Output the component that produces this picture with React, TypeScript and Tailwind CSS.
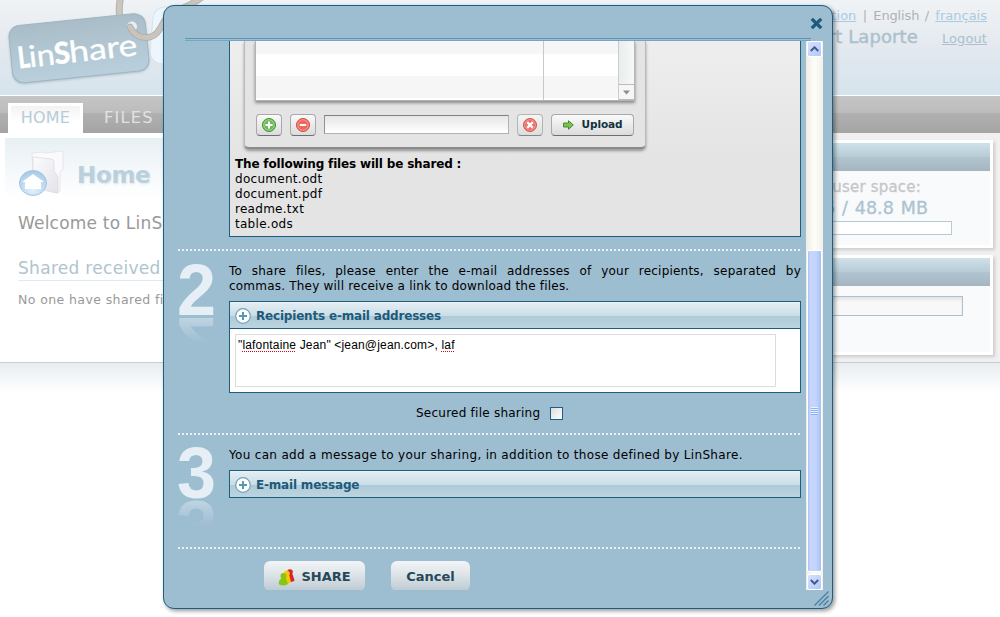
import type { ReactNode } from 'react';

function Logo() {
  return (
    <svg width="220" height="95" viewBox="0 0 220 95" className="block shrink-0">
      <defs>
        <linearGradient id="tag" x1="0" y1="0" x2="0" y2="1">
          <stop offset="0" stopColor="#a9bdc8" />
          <stop offset="1" stopColor="#b9d0dc" />
        </linearGradient>
        <filter id="soft" x="-10%" y="-10%" width="120%" height="130%">
          <feDropShadow dx="0" dy="1" stdDeviation="1.2" floodColor="#8a9aa5" floodOpacity="0.5" />
        </filter>
      </defs>
      <rect x="154" y="6" width="60" height="57" rx="12" fill="#edf6fc" stroke="#d5e3ec" transform="rotate(5 154 6)" />
      <path d="M120.500 -2 C119 5 119 10 119.500 15" fill="none" stroke="#b5b0aa" strokeWidth="7" />
      <path d="M120.500 -2 C119 5 119 10 119.500 15" fill="none" stroke="#cbc6c0" strokeWidth="5" />
      <g filter="url(#soft)">
        <rect x="10.500" y="19.500" width="137" height="57.500" rx="11" fill="url(#tag)" stroke="#9fb6c3" transform="rotate(-5.800 79 48)" />
      </g>
      <circle cx="132" cy="26.500" r="5" fill="#e9eef2" />
      <path d="M130 27 C134 35 141 39 150 37 C158 35 160 28 165 20 C172 10 188 8 201 -2" fill="none" stroke="#b0aba4" strokeWidth="6.500" strokeLinecap="round" />
      <path d="M130 27 C134 35 141 39 150 37 C158 35 160 28 165 20 C172 10 188 8 201 -2" fill="none" stroke="#c9c4be" strokeWidth="5" strokeLinecap="round" />
      <g transform="rotate(-6.500 20 68.500)" fill="#ffffff" stroke="#ffffff" strokeWidth="0.300" fontFamily="Lato, sans-serif" fontSize="30">
        <text x="19" y="68.500" fontWeight="900" textLength="12" lengthAdjust="spacingAndGlyphs">L</text>
        <text x="30" y="68.500" textLength="26" lengthAdjust="spacingAndGlyphs">in</text>
        <text x="55.500" y="68.500" fontWeight="900" textLength="16" lengthAdjust="spacingAndGlyphs">S</text>
        <text x="70.500" y="68.500" textLength="68.500" lengthAdjust="spacingAndGlyphs">hare</text>
      </g>
    </svg>
  );
}

function HomeIcon() {
  return (
    <svg width="48" height="50" viewBox="0 0 48 50" className="block">
      <defs>
        <linearGradient id="fold" x1="0" y1="0" x2="1" y2="1">
          <stop offset="0" stopColor="#fbfbfd" />
          <stop offset="1" stopColor="#e4e2ea" />
        </linearGradient>
        <radialGradient id="orb" cx="0.5" cy="0.75" r="0.7">
          <stop offset="0" stopColor="#e3f3fe" />
          <stop offset="1" stopColor="#a8cbea" />
        </radialGradient>
      </defs>
      <path d="M14 4 L25 3 L27 4 L45 2 V20 L42 24 V42 L39 44 L16 38 Z" fill="#fafafc" stroke="#e6e6ec" />
      <path d="M15 8 L33 10 Q36 10 36 14 V22 L40 28 V44 L34 43 L15 38 Z" fill="url(#fold)" stroke="#dddce3" strokeWidth="0.800" />
      <ellipse cx="15" cy="34" rx="13.500" ry="12.500" fill="url(#orb)" stroke="#a6c4df" />
      <path d="M15 25 L26 33 H23 V40 H7 V33 H4 Z" fill="#ffffff" />
    </svg>
  );
}

function SideCard({ height, children }: { height: string; children: ReactNode }) {
  return (
    <div className={`w-[193px] border-[3px] border-white bg-[#f8fafc] shadow-[2px_2px_3px_rgba(0,0,0,0.15)] ${height}`}>
      <div className="h-7 bg-[linear-gradient(#cfe1e9,#b7ccd7_50%,#b0c5d1_50%,#a5b5bf)]" />
      {children}
    </div>
  );
}

function Page() {
  return (
    <div className="flex h-[617px] w-[1000px] flex-col bg-white">
      <header className="flex h-[95px] justify-between bg-[linear-gradient(#f0f3f5,#e3e9ef_50%,#d6e4ed)]">
        <Logo />
        <div className="flex flex-col items-end pr-[13px] pt-[7px] text-[13px] whitespace-nowrap">
          <div className="flex h-[18px] leading-[18px] text-[#aeb2b5]">
            <span className="text-[#a9cbe2] underline">Administration</span>
            <span className="w-[17px] text-center">|</span>
            <span className="w-[45px] tracking-[-0.15px]">English</span>
            <span className="w-[17px] text-center">/</span>
            <span className="text-[#a9cbe2] underline">français</span>
          </div>
          <div className="flex h-6 items-center text-[#abc0cc]">
            <span className="pr-6 text-[18px] leading-6 tracking-[0.1px] [-webkit-text-stroke:0.4px_#abc0cc]">Robert Laporte</span>
            <span className="pt-[3px] text-[13px] tracking-[0.1px] underline">Logout</span>
          </div>
        </div>
      </header>
      <nav className="mt-px flex h-[37px] items-end bg-[linear-gradient(#c5c5c5,#bcbcbc_45%,#b1b1b1_46%,#a4a4a4)] pl-2 text-[16px]">
        <div className="flex h-[30px] w-[75px] items-center justify-center border-[3px] border-b-0 border-white bg-[linear-gradient(#f3f3f3,#ffffff_60%)] pb-[3px] tracking-[0.2px] text-[#b5ccd8]">HOME</div>
        <div className="flex h-[30px] items-center pl-[21px] tracking-[1.3px] text-[#e2e2e2]">FILES</div>
      </nav>
      <div className="flex h-[230px] border-b border-[#c9cdd0]">
        <main className="flex-1 pl-[5px] pt-[5px]">
          <div className="h-[223px] bg-[linear-gradient(#e8f0f4,#ffffff_60px)] pl-[13px] whitespace-nowrap">
            <div className="flex h-[70px] pt-[11px]">
              <HomeIcon />
              <h1 className="pt-[9px] pl-[11px] text-[23px] leading-[34px] font-bold tracking-[-0.3px] text-[#b9d1dd] [text-shadow:1px_1px_2px_#dfe6ea]">Home</h1>
            </div>
            <p className="h-[43px] pt-[5px] text-[17px] leading-[20px] tracking-[0.2px] text-[#999999]">Welcome to LinShare</p>
            <h2 className="h-[30px] border-b border-[#deebf3] pt-[6px] text-[17px] leading-[22px] tracking-[0.3px] text-[#afc4cf]">Shared received files</h2>
            <p className="pt-[10px] text-[12.500px] leading-[18px] tracking-[0.4px] text-[#999999]">No one have shared files</p>
          </div>
        </main>
        <aside className="flex w-[220px] flex-col gap-[7px] bg-[#f0f0f0] pt-[7px] pl-5">
          <SideCard height="h-[108px]">
            <div className="whitespace-nowrap">
              <div className="flex h-[27px] items-end justify-end pr-[69px] text-[15px] leading-[22px] tracking-[0.2px] text-[#c6c6c8] [-webkit-text-stroke:0.3px_#c6c6c8]">user space:</div>
              <div className="flex h-[23px] items-center justify-end pr-[62px] pb-[3px] text-[17.500px] leading-[20px] tracking-[0.1px] text-[#adc3d0] [-webkit-text-stroke:0.3px_#adc3d0] [word-spacing:1px]">21.6 / 48.8 MB</div>
              <div className="h-[14px] w-[149px] border border-[#b5ccd8] bg-white" />
            </div>
          </SideCard>
          <SideCard height="h-[100px]">
            <div className="mt-[10px] h-5 w-[160px] border border-[#abc0cd] bg-[#f8f8f8] shadow-[inset_0_3px_3px_#e6e6e6]" />
          </SideCard>
        </aside>
      </div>
      <div className="h-[29px] bg-[linear-gradient(#e8edf1,#ffffff)]" />
    </div>
  );
}

function Dots() {
  return <div className="h-[2px] w-[622px] shrink-0 bg-[repeating-linear-gradient(90deg,#e8f0f5_0px_2px,transparent_2px_4px)]" />;
}

function StepNumber({ n }: { n: number }) {
  return (
    <div className="-mt-px w-[51px] shrink-0">
      <div className="-ml-px h-[54px] w-[40px] origin-left scale-x-[0.96] font-['Liberation_Sans',Arial,sans-serif] text-[73px] leading-[54px] font-bold text-[#e5eff5] [-webkit-box-reflect:below_-1px_linear-gradient(transparent_50%,rgba(0,0,0,0.5))]">
        {n}
      </div>
    </div>
  );
}

function PanelTitle({ children }: { children: ReactNode }) {
  return (
    <div className="flex h-[26px] items-center border-t border-white/70 bg-[linear-gradient(#e3edf2,#c9dde6_52%,#aecbd8_53%,#bdd4df)] pl-[5px]">
      <svg width="16" height="16" viewBox="0 0 16 16">
        <circle cx="8" cy="8" r="7.300" fill="#fff" stroke="#6fa3bc" strokeWidth="1.200" />
        <path d="M8 4V12M4 8H12" stroke="#5a96b5" strokeWidth="2" />
      </svg>
      <span className="pl-[5px] text-[12px] font-bold tracking-[-0.19px] whitespace-nowrap text-[#1d5a7b]">{children}</span>
    </div>
  );
}

const toolButton = 'flex h-[22px] items-center justify-center rounded-[4px] border border-[#a9a9a9] border-b-[#6f6f6f] bg-[linear-gradient(#fafafa,#dcdcdc)]';

function RoundGlyph({ color, rim, d, thick }: { color: string; rim: string; d: string; thick?: boolean }) {
  return (
    <svg width="14" height="14" viewBox="0 0 14 14">
      <circle cx="7" cy="7" r="6.500" fill={color} stroke={rim} />
      <circle cx="7" cy="7" r="5.300" fill="none" stroke="#fff" strokeOpacity="0.5" strokeWidth="0.700" />
      <path d={d} stroke="#fff" strokeWidth={thick ? 2.4 : 2} fill="none" />
    </svg>
  );
}

function Uploader() {
  return (
    <div className="ml-[14px] h-[108px] w-[402px] rounded-b-[5px] border-x border-b-2 border-x-[#b9b9b9] border-b-[#8c8c8c] bg-[#e4e4e4] pl-[10px] shadow-[0_2px_3px_rgba(0,0,0,0.35)]">
      <div className="flex h-[60px] w-[380px] border-x border-b border-[#b3b3b3] bg-white shadow-[0_2px_3px_rgba(0,0,0,0.4)]">
        <div className="h-[59px] w-[288px] border-r border-[#c8c8c8] bg-[linear-gradient(#f6f6f6_13px,#ffffff_13px_35px,#f6f6f6_35px_57px,#ffffff_57px)]" />
        <div className="h-[59px] w-[74px] bg-[linear-gradient(#f6f6f6_13px,#ffffff_13px_35px,#f6f6f6_35px_57px,#ffffff_57px)]" />
        <div className="flex w-4 flex-col justify-end border-l border-[#cccccc] bg-[linear-gradient(90deg,#eaeded,#f7f8f8)]">
          <div className="flex h-4 items-center justify-center border-y border-[#bbbbbb] bg-[#f6f6f6]">
            <svg width="7" height="5" viewBox="0 0 7 5"><path d="M0 .5H7L3.500 4.500Z" fill="#8b8b8b" /></svg>
          </div>
        </div>
      </div>
      <div className="flex pt-[13px] pl-px">
        <div className={`${toolButton} w-[26px]`}><RoundGlyph color="#6dbb55" rim="#3c8f35" d="M7 3.500V10.500M3.500 7H10.500" /></div>
        <div className={`${toolButton} ml-2 w-[26px]`}><RoundGlyph color="#f0665a" rim="#cc4a42" d="M3.800 7H10.200" /></div>
        <div className="mt-px ml-2 h-[19px] w-[185px] border border-[#b0b3b3] border-t-[#7c8080] border-l-[#8f9393] bg-[linear-gradient(#e6e6e6,#ffffff)]" />
        <div className={`${toolButton} ml-2 w-[26px] opacity-80`}><RoundGlyph thick color="#ee4a40" rim="#c9352f" d="M4.200 4.200L9.800 9.800M9.800 4.200L4.200 9.800" /></div>
        <div className={`${toolButton} ml-2 w-[83px] gap-2`}>
          <svg width="11" height="10" viewBox="0 0 11 10"><path d="M.5 3H5.500V.7L10.300 5L5.500 9.300V7H.5Z" fill="#7cc24f" stroke="#4c8a3a" /></svg>
          <span className="text-[10.500px] font-bold tracking-[-0.1px] text-[#103340]">Upload</span>
        </div>
      </div>
    </div>
  );
}

function ShareIcon() {
  return (
    <svg width="17" height="18" viewBox="0 0 17 18">
      <g fill="#d9202c"><circle cx="12" cy="4" r="2.800" /><path d="M9.500 6H14.500L16.500 12.500Q13 15.500 9 12Z" /></g>
      <g fill="#ffc400"><circle cx="8.800" cy="5.800" r="3" /><path d="M6 8H11.500L13 14Q9 17 5.500 14Z" /></g>
      <g fill="#86c712"><circle cx="5.500" cy="8" r="3" /><path d="M3.500 10H7.800L10 16Q5.500 19 .8 16.300Q.5 12.500 3.500 10Z" /></g>
    </svg>
  );
}

function ScrollButton({ up }: { up?: boolean }) {
  return (
    <div className="flex h-[16px] w-[15px] shrink-0 items-center justify-center rounded-[2px] border border-white bg-[linear-gradient(135deg,#d6e1ff,#b2c8fb)]">
      <svg width="9" height="6" viewBox="0 0 9 6">
        <path d={up ? 'M.8 5L4.500 1.300L8.200 5' : 'M.8 1L4.500 4.700L8.200 1'} fill="none" stroke="#465a85" strokeWidth="2" />
      </svg>
    </div>
  );
}

function Scrollbar() {
  return (
    <div className="ml-[5px] flex h-[549px] w-[17px] flex-col items-center bg-[linear-gradient(90deg,#efede4,#fdfdf9_50%,#f3f1e8)]">
      <ScrollButton up />
      <div className="h-[193px] shrink-0" />
      <div className="flex h-[322px] w-[15px] items-center justify-center rounded-[2px] border border-white bg-[linear-gradient(90deg,#a9bff4,#c6d5fd_15%,#c5d4fc_60%,#b0cafa_85%,#a8bdf0)]">
        <div className="h-2 w-[7px] bg-[repeating-linear-gradient(#eef4fe_0px_1px,#8cb0f8_1px_2px)]" />
      </div>
      <div className="h-[2px] shrink-0" />
      <ScrollButton />
    </div>
  );
}

const actionButton = 'flex h-[30px] items-center justify-center rounded-[6px] bg-[linear-gradient(#f3f5f7,#dbe2e6_50%,#bccad3)] pt-px text-[13px] font-bold text-[#264858]';

function ShareDialog() {
  return (
    <div className="absolute top-[5px] left-[163px] h-[604px] w-[670px] rounded-[11px] border border-[#1d5d7f] bg-[#9dbdd1] text-[12px] text-black shadow-[2px_2px_4px_rgba(0,0,0,0.4)]">
      <div className="flex h-[35px] flex-col">
        <div className="flex h-8 justify-end pt-[11px] pr-[9px]">
          <svg width="13" height="13" viewBox="0 0 13 13"><path d="M1.800 1.800L11.200 11.200M11.200 1.800L1.800 11.200" stroke="#1d5b7c" strokeWidth="3.300" /></svg>
        </div>
        <div className="ml-[21px] h-[3px] w-[626px] border-y border-t-[#5b93b4] border-b-[#76a5c0]" />
      </div>
      <div className="flex h-[549px] overflow-hidden pl-[14px]">
        <div className="flex w-[623px] flex-col">
          <div className="ml-[51px] h-[196px] w-[572px] shrink-0 border border-t-0 border-[#1d5d7f] bg-[linear-gradient(#eeeeee,#e4e4e4_60%)]">
            <Uploader />
            <div className="pt-[8px] pl-[5px] leading-[15px] tracking-[0.28px] whitespace-nowrap">
              <div className="font-bold tracking-[-0.17px]">The following files will be shared :</div>
              <div>document.odt</div>
              <div>document.pdf</div>
              <div>readme.txt</div>
              <div>table.ods</div>
            </div>
          </div>
          <div className="h-3 shrink-0" />
          <Dots />
          <div className="flex h-[142px] shrink-0 pt-[13px]">
            <StepNumber n={2} />
            <div className="w-[572px]">
              <p className="h-[37px] text-justify leading-[15px] tracking-[0.21px]">
                To share files, please enter the e-mail addresses of your recipients, separated by <span className="whitespace-nowrap">commas. They</span> will receive a link to download the files.
              </p>
              <div className="h-[92px] border border-[#1d5d7f] bg-white">
                <PanelTitle>Recipients e-mail addresses</PanelTitle>
                <div className="border-t border-[#1d5d7f] pt-[5px] pl-[5px]">
                  <div className="h-[53px] w-[541px] border border-[#dcdcdc] pt-[3px] pl-[2px] font-['Liberation_Sans',Arial,sans-serif] text-[12px] leading-[15px] tracking-[0.17px]">
                    "<span className="underline decoration-red-600 decoration-dotted decoration-1 underline-offset-2">lafontaine</span> Jean" &lt;jean@jean.com&gt;, <span className="underline decoration-red-600 decoration-dotted decoration-1 underline-offset-2">laf</span>
                  </div>
                </div>
              </div>
            </div>
          </div>
          <div className="flex h-10 shrink-0 items-center pl-[238px]">
            <span className="w-[124px] tracking-[0.24px] whitespace-nowrap">Secured file sharing</span>
            <span className="ml-[10px] size-[13px] border border-[#1d5d90] bg-[linear-gradient(135deg,#dcdcd7,#ffffff)]" />
          </div>
          <Dots />
          <div className="flex h-[112px] shrink-0 pt-[12px]">
            <StepNumber n={3} />
            <div className="w-[572px] pt-px">
              <p className="h-[22px] leading-[15px] tracking-[0.32px] whitespace-nowrap">You can add a message to your sharing, in addition to those defined by LinShare.</p>
              <div className="h-[28px] border border-[#1d5d7f]">
                <PanelTitle>E-mail message</PanelTitle>
              </div>
            </div>
          </div>
          <Dots />
          <div className="flex gap-[26px] pt-3 pl-[86px]">
            <button className={`${actionButton} w-[101px] gap-1.5`}><ShareIcon />SHARE</button>
            <button className={`${actionButton} w-[79px]`}>Cancel</button>
          </div>
        </div>
        <Scrollbar />
      </div>
      <svg width="15" height="15" viewBox="0 0 15 15" className="absolute right-[3px] bottom-[2px]">
        <path d="M.5 14.500L14.500 .5M5 14.500L14.500 5M9.500 14.500L14.500 9.500" stroke="#477f9f" strokeWidth="1.300" />
      </svg>
    </div>
  );
}

export default function App() {
  return (
    <div className="relative h-[617px] w-[1000px] overflow-hidden font-['DejaVu_Sans',Verdana,sans-serif]">
      <Page />
      <ShareDialog />
    </div>
  );
}
